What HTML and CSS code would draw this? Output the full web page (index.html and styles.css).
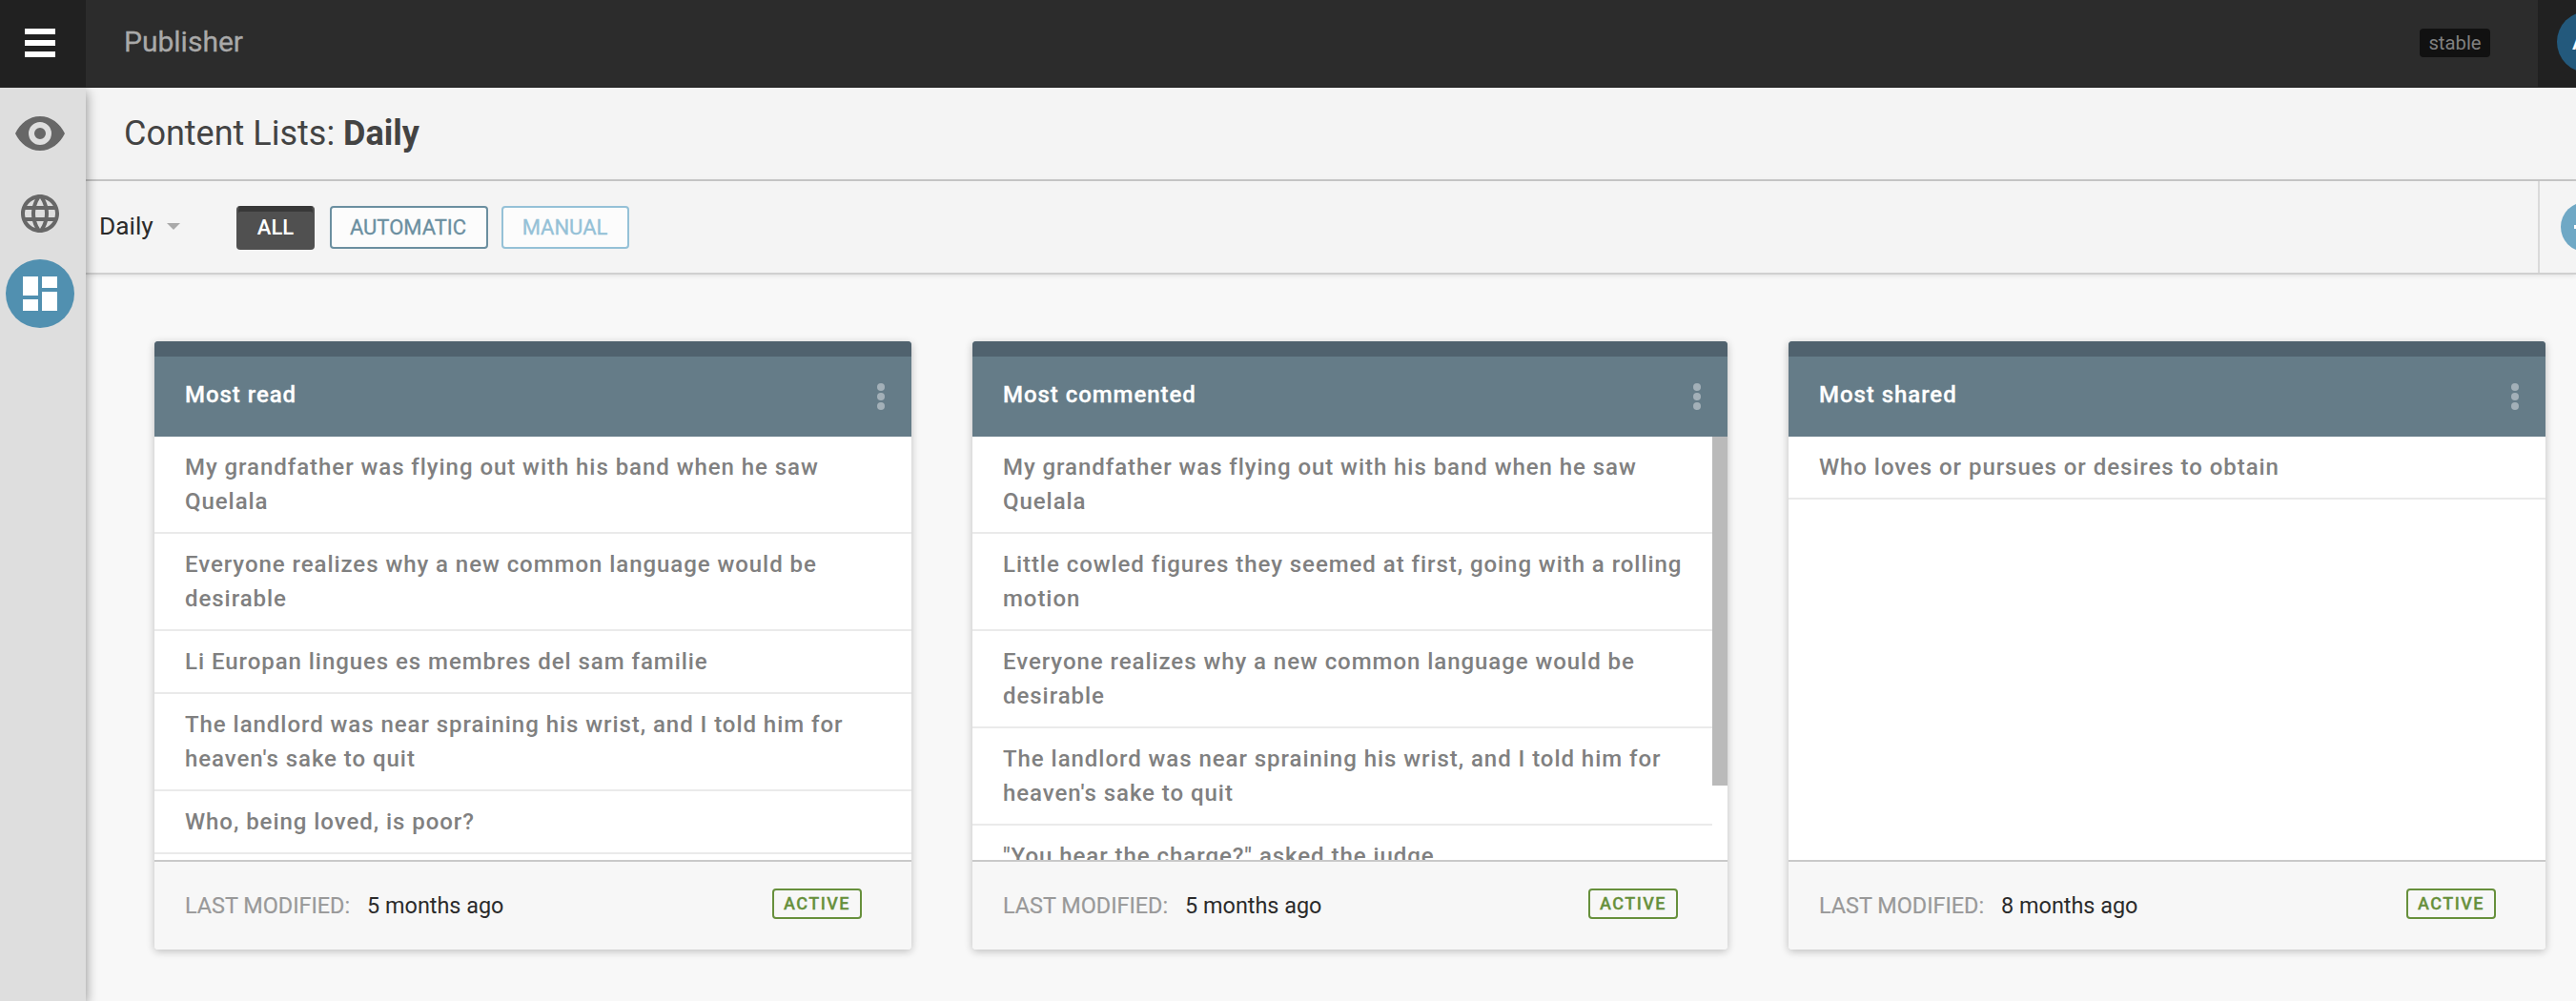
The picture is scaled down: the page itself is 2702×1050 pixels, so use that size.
FILE: index.html
```html
<!DOCTYPE html>
<html lang="en">
<head>
<meta charset="utf-8">
<title>Publisher</title>
<link rel="stylesheet" href="styles.css">
</head>
<body>
<header class="topbar">
  <button class="menu-toggle" aria-label="Menu"><span></span><span></span><span></span></button>
  <div class="app-name">Publisher</div>
  <span class="env-tag">stable</span>
  <div class="user"><span class="avatar">A</span></div>
</header>
<div class="shell">
  <nav class="sidebar">
    <a class="nav-item"><svg class="icon-eye" viewBox="0 0 52 36"><path fill-rule="evenodd" d="M26 0C14.500 0 5 7.500 0 18c5 10.500 14.500 18 26 18s21-7.500 26-18C47 7.500 37.500 0 26 0zm0 30a12 12 0 1 1 0-24 12 12 0 0 1 0 24zm0-18a6 6 0 1 0 0 12 6 6 0 0 0 0-12z"/></svg></a>
    <a class="nav-item"><svg class="icon" viewBox="0 0 24 24"><path d="M11.99 2C6.470 2 2 6.480 2 12s4.470 10 9.990 10C17.520 22 22 17.520 22 12S17.520 2 11.990 2zm6.930 6h-2.950c-.32-1.250-.78-2.450-1.380-3.560 1.840.63 3.370 1.910 4.330 3.560zM12 4.040c.83 1.200 1.480 2.530 1.910 3.960h-3.820c.43-1.430 1.080-2.760 1.910-3.960zM4.260 14C4.100 13.360 4 12.690 4 12s.1-1.360.26-2h3.380c-.08.66-.14 1.320-.14 2s.06 1.340.14 2H4.260zm.82 2h2.950c.32 1.250.78 2.450 1.380 3.560-1.840-.63-3.370-1.900-4.330-3.560zm2.950-8H5.080c.96-1.660 2.490-2.930 4.330-3.560C8.810 5.550 8.350 6.750 8.030 8zM12 19.960c-.83-1.200-1.480-2.530-1.910-3.960h3.820c-.43 1.430-1.080 2.760-1.910 3.960zM14.340 14H9.660c-.09-.66-.16-1.320-.16-2s.07-1.350.16-2h4.680c.09.65.16 1.320.16 2s-.07 1.340-.16 2zm.25 5.560c.6-1.110 1.060-2.310 1.380-3.560h2.950c-.96 1.650-2.490 2.930-4.330 3.560zM16.360 14c.08-.66.14-1.320.14-2s-.06-1.340-.14-2h3.380c.16.64.26 1.310.26 2s-.1 1.360-.26 2h-3.380z"/></svg></a>
    <a class="nav-item nav-item-active"><svg class="icon" viewBox="0 0 24 24"><path d="M3 13h8V3H3v10zm0 8h8v-6H3v6zm10 0h8V11h-8v10zm0-18v6h8V3h-8z"/></svg></a>
  </nav>
  <main class="main">
    <div class="page-head"><h1>Content Lists: <b>Daily</b></h1></div>
    <div class="toolbar">
      <div class="site-select">Daily<i class="caret"></i></div>
      <div class="filters">
        <button class="filter filter-all">ALL</button>
        <button class="filter filter-auto">AUTOMATIC</button>
        <button class="filter filter-manual">MANUAL</button>
      </div>
      <div class="add-cell"><button class="add" aria-label="Add list"></button></div>
    </div>
    <div class="cards">
      <section class="card">
        <header class="card-head"><h2>Most read</h2><span class="dots"><i></i><i></i><i></i></span></header>
        <div class="card-body">
          <ul class="list">
            <li>My grandfather was flying out with his band when he saw Quelala</li>
            <li>Everyone realizes why a new common language would be desirable</li>
            <li>Li Europan lingues es membres del sam familie</li>
            <li>The landlord was near spraining his wrist, and I told him for heaven's sake to quit</li>
            <li>Who, being loved, is poor?</li>
          </ul>
        </div>
        <footer class="card-foot"><span class="label">LAST MODIFIED:</span><span class="date">5 months ago</span><span class="status">ACTIVE</span></footer>
      </section>
      <section class="card">
        <header class="card-head"><h2>Most commented</h2><span class="dots"><i></i><i></i><i></i></span></header>
        <div class="card-body">
          <ul class="list">
            <li>My grandfather was flying out with his band when he saw Quelala</li>
            <li>Little cowled figures they seemed at first, going with a rolling motion</li>
            <li>Everyone realizes why a new common language would be desirable</li>
            <li>The landlord was near spraining his wrist, and I told him for heaven's sake to quit</li>
            <li>"You hear the charge?" asked the judge</li>
          </ul>
          <div class="scrollbar"></div>
        </div>
        <footer class="card-foot"><span class="label">LAST MODIFIED:</span><span class="date">5 months ago</span><span class="status">ACTIVE</span></footer>
      </section>
      <section class="card">
        <header class="card-head"><h2>Most shared</h2><span class="dots"><i></i><i></i><i></i></span></header>
        <div class="card-body">
          <ul class="list">
            <li>Who loves or pursues or desires to obtain</li>
          </ul>
        </div>
        <footer class="card-foot"><span class="label">LAST MODIFIED:</span><span class="date">8 months ago</span><span class="status">ACTIVE</span></footer>
      </section>
    </div>
  </main>
</div>
</body>
</html>
```
FILE: styles.css
```css
* { box-sizing: border-box; margin: 0; padding: 0; }
body { height: 1050px; overflow: hidden; display: flex; flex-direction: column; background: #f8f8f8; color: #2b2b2b; font-family: Roboto, "Liberation Sans", sans-serif; }
button { font-family: inherit; border: 0; }

/* Top bar */
.topbar { flex: none; height: 92px; display: flex; align-items: center; background: #2c2c2c; box-shadow: inset 0 -1px #202020; overflow: hidden; }
.menu-toggle { width: 90px; height: 92px; padding: 30px 32px 32px 26px; display: flex; flex-direction: column; gap: 6px; background: #212121; }
.menu-toggle span { height: 6px; background: #fff; }
.app-name { margin-left: 40px; padding-bottom: 4px; flex: 1; font-size: 30px; line-height: 40px; color: #a9a9a9; -webkit-text-stroke: .3px; }
.env-tag { height: 30px; width: 74px; margin: 0 50px 2px 0; border-radius: 4px; background: #111; color: #808080; font-size: 20.300px; line-height: 30px; text-align: center; }
.user { width: 40px; height: 92px; padding: 12px 0 0 20px; background: #212121; }
.avatar { display: block; width: 64px; height: 64px; padding-left: 16px; border-radius: 50%; background: #23597c; color: #fff; font-size: 24px; font-weight: 500; line-height: 64px; }

.shell { flex: 1; min-height: 0; display: flex; }

/* Side navigation */
.sidebar { z-index: 1; flex: none; width: 90px; padding: 12px 12px 0 6px; display: flex; flex-direction: column; gap: 12px; background: #dedede; box-shadow: 0 4px 12px rgba(0, 0, 0, .45); clip-path: inset(0 -20px 0 0); }
.nav-item { flex: none; width: 72px; height: 72px; display: flex; align-items: center; justify-content: center; border-radius: 50%; fill: #676767; }
.nav-item-active { background: #5190b0; fill: #fff; }
.icon { width: 48px; height: 48px; }
.icon-eye { width: 52px; height: 36px; }

/* Page header and filters */
.main { flex: 1; min-width: 0; }
.page-head { height: 98px; padding-left: 40px; display: flex; align-items: center; background: #f4f4f4; border-bottom: 2px solid #c9c9c9; }
.page-head h1 { font-size: 36px; font-weight: 400; color: #434343; }
.toolbar { height: 98px; display: flex; align-items: center; background: #f4f4f4; border-bottom: 2px solid #d0d0d0; box-shadow: 0 1px 5px rgba(0, 0, 0, .1); }
.site-select { width: 158px; padding: 0 0 2px 14px; display: flex; align-items: center; gap: 14px; font-size: 26.300px; }
.caret { border: 7.500px solid transparent; border-top-color: #a9a9a9; border-bottom: 0; }
.filters { flex: 1; display: flex; align-items: flex-start; }
.filter { height: 45px; margin-top: 1px; border: 2px solid; border-radius: 4px; background: #fcfcfc; font-size: 22px; line-height: 41px; text-align: center; }
.filter-all { width: 82px; height: 46px; margin-right: 16px; border-color: #505050; background: #505050; box-shadow: inset 0 4px #383838; border-top-color: #383838; color: #fff; font-weight: 500; }
.filter-auto { width: 166px; margin-right: 14px; padding-right: 2px; border-color: #6b8fa0; color: #6b8fa0; -webkit-text-stroke: .3px; }
.filter-manual { width: 134px; padding-right: 1px; border-color: #95c1d7; color: #95c1d7; -webkit-text-stroke: .3px; }
.add-cell { width: 40px; height: 96px; padding: 22px 0 0 22px; border-left: 2px solid #dadada; overflow: hidden; }
.add { width: 52px; height: 52px; border-radius: 50%; background: linear-gradient(#fff, #fff) center / 24px 4px no-repeat, linear-gradient(#fff, #fff) center / 4px 24px no-repeat, #6fa8c5; }

/* Cards */
.cards { padding: 70px 32px 0 72px; display: grid; grid-template-columns: 794px 792px 794px; gap: 64px; }
.card { height: 638px; display: flex; flex-direction: column; border-radius: 4px; overflow: hidden; background: #fff; box-shadow: 0 2px 8px rgba(0, 0, 0, .24); }
.card-head { flex: none; height: 100px; padding: 12px 28px 0 32px; display: flex; align-items: flex-start; justify-content: space-between; border-top: 16px solid #50626e; background: #657c88; }
.card-head h2 { padding-top: 8px; font-size: 24px; font-weight: 500; line-height: 40px; letter-spacing: .950px; color: #fff; -webkit-text-stroke: .3px; }
.dots { padding-top: 16px; display: flex; flex-direction: column; gap: 2px; }
.dots i { width: 8px; height: 8px; border-radius: 50%; background: #a3b0b8; }
.card-body { flex: 1; min-height: 0; display: flex; overflow: hidden; }
.list { flex: 1; list-style: none; }
.list li { padding: 14px 26px 14px 32px; border-bottom: 2px solid #eaeaea; font-size: 24px; font-weight: 500; line-height: 36px; letter-spacing: .95px; color: #808080; }
.scrollbar { flex: none; width: 16px; height: 366px; background: #bababa; }
.card-foot { flex: none; height: 94px; padding: 0 52px 0 32px; display: flex; align-items: center; border-top: 2px solid #c9c9c9; background: #f7f7f7; font-size: 23.400px; }
.label { color: #999; -webkit-text-stroke: .2px; }
.date { flex: 1; margin-left: 18px; }
.status { width: 94px; height: 32px; margin-bottom: 4px; border: 2px solid #67903c; border-radius: 4px; color: #67903c; font-size: 18px; font-weight: 500; line-height: 28px; letter-spacing: 1.450px; text-align: center; -webkit-text-stroke: .3px; }
```
